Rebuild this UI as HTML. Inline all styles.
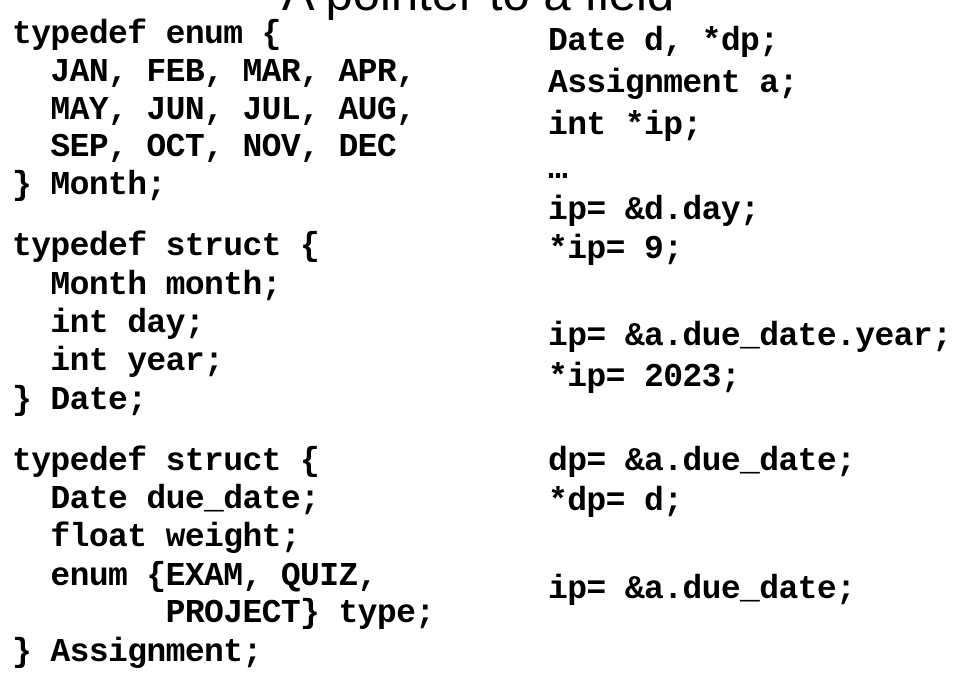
<!DOCTYPE html>
<html><head><meta charset="utf-8"><style>
html,body{margin:0;padding:0;background:#fff;width:956px;height:674px;overflow:hidden;position:relative}
.t{position:absolute;left:0;width:956px;text-align:center;top:-27px;font:49px/42px "Liberation Sans",sans-serif;color:#000}
.l{position:absolute;font:bold 33px/38px "Liberation Mono",monospace;letter-spacing:-0.6px;color:#000;white-space:pre}
</style></head><body>
<div class="t">A pointer to a field</div>
<div class="l" style="left:12px;top:16px">typedef enum {</div>
<div class="l" style="left:12px;top:54px">  JAN, FEB, MAR, APR,</div>
<div class="l" style="left:12px;top:92px">  MAY, JUN, JUL, AUG,</div>
<div class="l" style="left:12px;top:129px">  SEP, OCT, NOV, DEC</div>
<div class="l" style="left:12px;top:167px">} Month;</div>
<div class="l" style="left:12px;top:228px">typedef struct {</div>
<div class="l" style="left:12px;top:267px">  Month month;</div>
<div class="l" style="left:12px;top:305px">  int day;</div>
<div class="l" style="left:12px;top:343px">  int year;</div>
<div class="l" style="left:12px;top:382px">} Date;</div>
<div class="l" style="left:12px;top:443px">typedef struct {</div>
<div class="l" style="left:12px;top:481px">  Date due_date;</div>
<div class="l" style="left:12px;top:519px">  float weight;</div>
<div class="l" style="left:12px;top:558px">  enum {EXAM, QUIZ,</div>
<div class="l" style="left:12px;top:595px">        PROJECT} type;</div>
<div class="l" style="left:12px;top:634px">} Assignment;</div>

<div class="l" style="left:548px;top:23px">Date d, *dp;</div>
<div class="l" style="left:548px;top:65px">Assignment a;</div>
<div class="l" style="left:548px;top:107px">int *ip;</div>
<div class="l" style="left:548px;top:151px">…</div>
<div class="l" style="left:548px;top:192px">ip= &amp;d.day;</div>
<div class="l" style="left:548px;top:231px">*ip= 9;</div>
<div class="l" style="left:548px;top:318px">ip= &amp;a.due_date.year;</div>
<div class="l" style="left:548px;top:359px">*ip= 2023;</div>
<div class="l" style="left:548px;top:443px">dp= &amp;a.due_date;</div>
<div class="l" style="left:548px;top:483px">*dp= d;</div>
<div class="l" style="left:548px;top:571px">ip= &amp;a.due_date;</div>
</body></html>
